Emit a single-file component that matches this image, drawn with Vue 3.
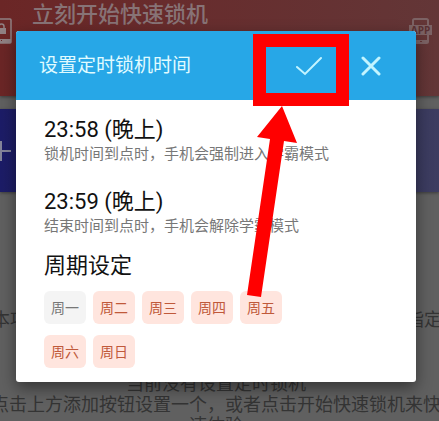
<template>
  <div class="page">
    <main class="content">
      <section class="card lock-card">
        <svg class="phone" viewBox="0 0 18 26" aria-hidden="true">
          <path
            d="M2 1h14a1 1 0 0 1 1 1v22a1 1 0 0 1-1 1H2a1 1 0 0 1-1-1V2a1 1 0 0 1 1-1z"
            fill="none"
            stroke="currentColor"
            stroke-width="1.5"
          />
          <path d="M1 21h16v4H1z" fill="currentColor" />
          <path d="M3 10h9v6H3z" fill="currentColor" />
          <path
            d="M5 10V8.500a2.500 2.500 0 0 1 5 0V10"
            fill="none"
            stroke="currentColor"
            stroke-width="1.5"
          />
          <path d="M5 22h1v1H5zM7 22h1v1H7z" fill="#652728" />
        </svg>
        <h1>立刻开始快速锁机</h1>
        <svg class="app-icon" viewBox="0 0 24 26" aria-hidden="true">
          <path
            d="M4 8V2.500Q4 1 5.500 1h12Q19 1 19 2.500V8M4 17v6.500Q4 25 5.500 25h12q1.500 0 1.500-1.500V17"
            fill="none"
            stroke="currentColor"
            stroke-width="2"
          />
          <path d="M4 22h15v3H4z" fill="currentColor" />
          <path d="M11 23h2v1h-2z" fill="#643536" />
          <path d="M0 7h23v10H0z" fill="currentColor" />
          <text x="11.500" y="16" text-anchor="middle">APP</text>
        </svg>
      </section>

      <section class="card add-card">
        <svg viewBox="0 0 20 20" aria-hidden="true">
          <path d="M0 10h20M10 0v20" stroke="currentColor" stroke-width="2" />
        </svg>
      </section>

      <div class="notice">
        <span>本项</span>
        <span>指定</span>
      </div>

      <p class="empty">
        <span>当前没有设置定时锁机</span>
        <span>点击上方添加按钮设置一个，或者点击开始快速锁机来快</span>
        <span>速体验</span>
      </p>
    </main>

    <div class="overlay">
      <div class="dialog" role="dialog" aria-labelledby="dialog-title">
        <header>
          <h2 id="dialog-title">设置定时锁机时间</h2>
          <button type="button" class="icon-btn" aria-label="确定">
            <svg viewBox="0 0 26 20">
              <path d="M1 11l8 7L25 2" />
            </svg>
          </button>
          <button type="button" class="icon-btn close" aria-label="关闭">
            <svg viewBox="0 0 20 20">
              <path d="M2 2l16 16M18 2L2 18" />
            </svg>
          </button>
        </header>

        <div class="body">
          <div v-for="item in times" :key="item.time" class="time">
            <strong>{{ item.time }}</strong>
            <small>{{ item.note }}</small>
          </div>

          <h3>周期设定</h3>
          <div class="days">
            <button
              v-for="day in days"
              :key="day.name"
              type="button"
              class="day"
              :class="{ active: day.active }"
              :aria-pressed="day.active"
              @click="day.active = !day.active"
            >
              {{ day.name }}
            </button>
          </div>
        </div>

        <svg class="pointer" viewBox="0 0 102 264" aria-hidden="true">
          <path d="M6.500 6.500h83v59h-83z" fill="none" stroke="#f00" stroke-width="13" />
          <path
            d="M29 72l15 37-13-2L8 263l-14-2L17 105 4 103z"
            fill="#f00"
          />
        </svg>
      </div>
    </div>
  </div>
</template>

<script setup>
import { ref } from "vue";

const times = [
  { time: "23:58 (晚上)", note: "锁机时间到点时，手机会强制进入学霸模式" },
  { time: "23:59 (晚上)", note: "结束时间到点时，手机会解除学霸模式" },
];

const days = ref([
  { name: "周一", active: false },
  { name: "周二", active: true },
  { name: "周三", active: true },
  { name: "周四", active: true },
  { name: "周五", active: true },
  { name: "周六", active: true },
  { name: "周日", active: true },
]);
</script>

<style>
body {
  margin: 0;
  background: #606060;
}
</style>

<style scoped>
.page {
  position: relative;
  height: 100vh;
  overflow: hidden;
  background: #606060;
  font-family: Roboto, "Noto Sans CJK SC", sans-serif;
}

h1,
h2,
h3,
p {
  margin: 0;
  font-weight: 400;
}

.card {
  display: flex;
  box-sizing: border-box;
  box-shadow: 0 1px 3px rgba(0, 0, 0, 0.4);
}

.lock-card {
  height: 96px;
  align-items: flex-start;
  padding-right: 6px;
  background: linear-gradient(90deg, #6b2626, #633637);
  color: #908083;
}

.lock-card h1 {
  flex: 1;
  padding-left: 20px;
  font-size: 22px;
  line-height: 30px;
  font-weight: 500;
  color: #877376;
}

.phone {
  width: 18px;
  height: 26px;
  margin: 18px 0 0 -6px;
}

.app-icon {
  width: 24px;
  height: 26px;
  margin-top: 18px;
  color: #7c6264;
}

.app-icon text {
  font: 700 10px "Open Sans", sans-serif;
  fill: #5a3032;
}

.add-card {
  height: 83px;
  margin-top: 13px;
  align-items: center;
  background: linear-gradient(90deg, #1c1c67, #3d3d60);
  color: #85859a;
}

.add-card svg {
  width: 20px;
  height: 20px;
  margin-left: -9px;
}

.notice {
  display: flex;
  justify-content: space-between;
  margin: 117px -3px 0 -8px;
  font-size: 18px;
  line-height: 21px;
  color: #343434;
}

.empty {
  display: flex;
  flex-direction: column;
  align-items: center;
  margin-top: 43px;
  padding-right: 7px;
  font-size: 18px;
  line-height: 21px;
  white-space: nowrap;
  color: #343434;
}

.overlay {
  position: absolute;
  inset: 0;
  padding: 31px 23px 0 16px;
}

.dialog {
  position: relative;
  border-radius: 3px;
  background: #fff;
  box-shadow: 0 6px 16px rgba(0, 0, 0, 0.45);
}

header {
  display: flex;
  align-items: center;
  height: 69px;
  padding: 0 35px 0 23px;
  border-radius: 3px 3px 0 0;
  background: #27a7e7;
}

header h2 {
  flex: 1;
  font-size: 19px;
  line-height: 28px;
  color: #e0fbff;
}

.icon-btn {
  display: flex;
  padding: 0;
  border: 0;
  background: none;
  cursor: pointer;
}

.icon-btn svg {
  width: 26px;
  height: 20px;
  fill: none;
  stroke: #c3f4ff;
  stroke-width: 2;
  stroke-linecap: round;
}

.close {
  margin-left: 39px;
}

.close svg {
  width: 20px;
  stroke-width: 3;
}

.body {
  padding: 16px 28px 14px;
}

.time {
  display: flex;
  flex-direction: column;
  margin-bottom: 24px;
}

.time strong {
  font-size: 22px;
  line-height: 28px;
  font-weight: 400;
  color: #111;
}

.time small {
  font-size: 15px;
  line-height: 20px;
  white-space: nowrap;
  color: #777;
}

.time + h3 {
  margin-top: -8px;
  font-size: 22px;
  line-height: 28px;
  color: #111;
}

.days {
  display: flex;
  flex-wrap: wrap;
  gap: 11px 7px;
  max-width: 260px;
  margin-top: 11px;
}

.day {
  width: 42px;
  height: 33px;
  padding: 0 0 2px;
  border: 0;
  border-radius: 6px;
  background: #f4f4f4;
  font: inherit;
  font-size: 14px;
  color: #777;
  cursor: pointer;
}

.day.active {
  background: #ffe5de;
  color: #c0593a;
}

/* red frame and arrow lying over the confirm button */
.pointer {
  position: absolute;
  top: 3px;
  right: 61px;
  width: 102px;
  height: 264px;
  overflow: visible;
  pointer-events: none;
}
</style>
